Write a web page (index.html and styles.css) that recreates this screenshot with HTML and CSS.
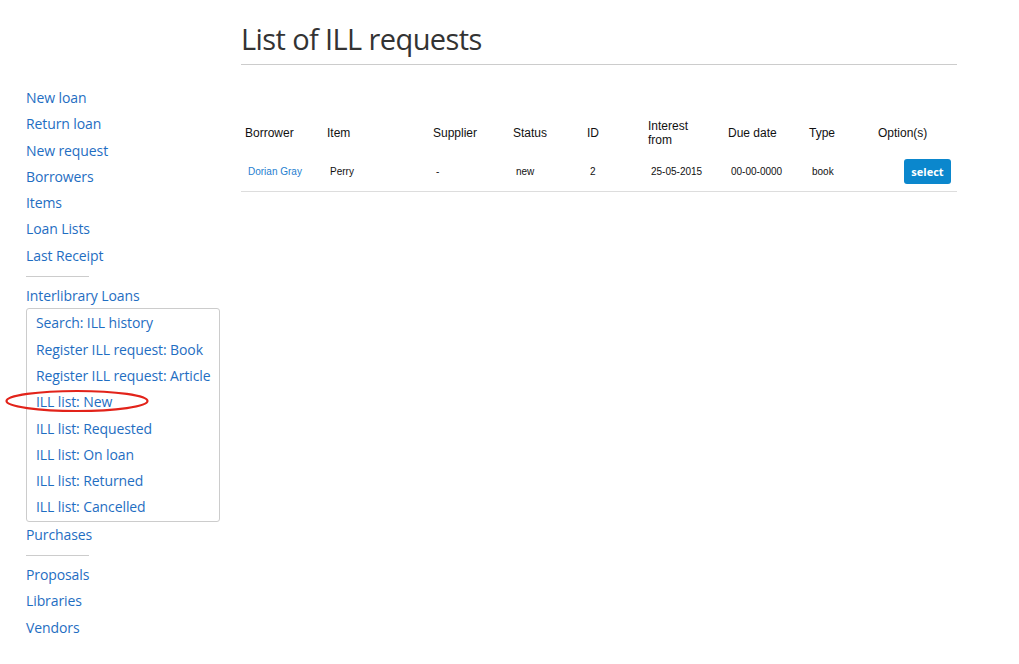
FILE: index.html
```html
<!DOCTYPE html>
<html>
<head>
<meta charset="utf-8">
<link rel="stylesheet" href="styles.css">
</head>
<body>
<div class="page">
  <aside class="sidebar">
    <nav class="menu">
      <a href="#">New loan</a>
      <a href="#">Return loan</a>
      <a href="#">New request</a>
      <a href="#">Borrowers</a>
      <a href="#">Items</a>
      <a href="#">Loan Lists</a>
      <a href="#">Last Receipt</a>
    </nav>
    <hr class="sep">
    <nav class="menu">
      <a href="#">Interlibrary Loans</a>
    </nav>
    <nav class="submenu">
      <a href="#">Search: ILL history</a>
      <a href="#">Register ILL request: Book</a>
      <a href="#">Register ILL request: Article</a>
      <a href="#" class="circled">ILL list: New
        <svg class="ellipse" width="146" height="26" viewBox="0 0 146 26"><ellipse cx="73" cy="13" rx="70.5" ry="10" fill="none" stroke="#e2231a" stroke-width="2.2"/></svg>
      </a>
      <a href="#">ILL list: Requested</a>
      <a href="#">ILL list: On loan</a>
      <a href="#">ILL list: Returned</a>
      <a href="#">ILL list: Cancelled</a>
    </nav>
    <nav class="menu">
      <a href="#">Purchases</a>
    </nav>
    <hr class="sep sep2">
    <nav class="menu">
      <a href="#">Proposals</a>
      <a href="#">Libraries</a>
      <a href="#">Vendors</a>
    </nav>
  </aside>
  <main class="main">
    <h1 class="title">List of ILL requests</h1>
    <table class="list">
      <colgroup>
        <col class="c1"><col class="c2"><col class="c3"><col class="c4"><col class="c5"><col class="c6"><col class="c7"><col class="c8"><col class="c9">
      </colgroup>
      <thead>
        <tr>
          <th>Borrower</th><th>Item</th><th>Supplier</th><th>Status</th><th>ID</th><th>Interest<br>from</th><th>Due date</th><th>Type</th><th>Option(s)</th>
        </tr>
      </thead>
      <tbody>
        <tr>
          <td><a href="#">Dorian Gray</a></td><td>Perry</td><td>-</td><td>new</td><td>2</td><td>25-05-2015</td><td>00-00-0000</td><td>book</td><td class="opt"><button class="btn">select</button></td>
        </tr>
      </tbody>
    </table>
  </main>
</div>
</body>
</html>
```
FILE: styles.css
```css
html, body { margin: 0; padding: 0; background: #fff; }
body { font-family: "Open Sans", "Liberation Sans", sans-serif; color: #333; }
a { color: #1f6ec2; text-decoration: none; }
.page { display: flex; width: 1019px; height: 664px; }
.sidebar { width: 194px; margin-left: 26px; padding-top: 85px; font-size: 14px; letter-spacing: -0.1px; flex-shrink: 0; }
.menu { display: flex; flex-direction: column; }
.menu a, .submenu a { display: block; line-height: 26.3px; height: 26.3px; white-space: nowrap; }
.sep { border: 0; border-top: 1px solid #ccc; width: 63px; margin: 7px 0 6px 0; height: 0; }
.sep2 { margin: 7px 0 6px 0; }
.submenu { border: 1px solid #ccc; border-radius: 3px; padding: 1px 0 0 9px; margin-top: -1px; display: flex; flex-direction: column; }
.circled { position: relative; }
.ellipse { position: absolute; left: -32px; top: -1px; pointer-events: none; }
.main { margin-left: 21px; width: 716px; }
.title { font-family: "Open Sans", sans-serif; font-weight: 400; font-size: 29px; letter-spacing: -0.6px; color: #333; margin: 19px 0 0 0; line-height: 40px; padding-bottom: 5px; border-bottom: 1px solid #ccc; }
.list { margin-top: 50px; border-collapse: collapse; width: 716px; table-layout: fixed; font-family: "Liberation Sans", Arial, sans-serif; color: #111; }
.c1 { width: 82px; } .c2 { width: 106px; } .c3 { width: 80px; } .c4 { width: 74px; } .c5 { width: 61px; }
.c6 { width: 80px; } .c7 { width: 81px; } .c8 { width: 69px; } .c9 { width: 83px; }
.list th { font-weight: 400; font-size: 12px; text-align: left; padding: 3px 0 3px 4px; line-height: 14px; height: 30px; vertical-align: middle; }
.list td { font-size: 10px; padding: 6px 0 6px 7px; height: 28px; vertical-align: middle; border-bottom: 1px solid #ddd; }
.list td a { color: #2680d0; }
.list td.opt { text-align: right; padding-right: 6px; }
.btn { background: #0b87cd; color: #fff; border: 0; border-radius: 3px; font-family: "Open Sans", sans-serif; font-weight: 700; font-size: 11px; width: 47px; height: 25px; padding: 0; cursor: pointer; }
```
